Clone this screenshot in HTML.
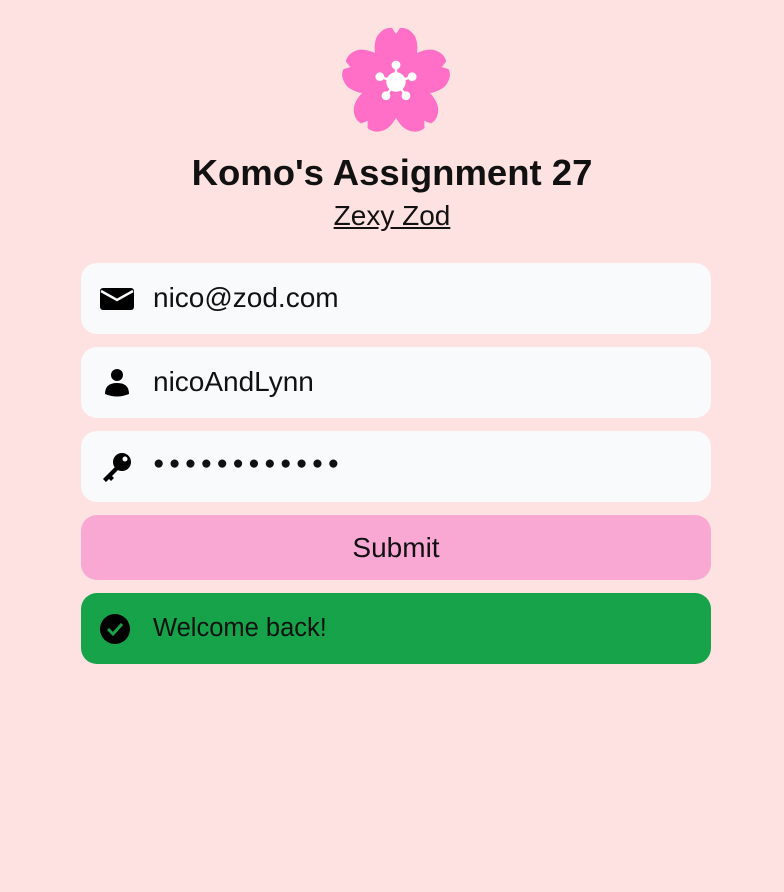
<!DOCTYPE html>
<html><head><style>
body{margin:0;background:#fee2e2;font-family:"Liberation Sans",sans-serif;width:784px;height:892px;position:relative;overflow:hidden}
.t{position:absolute;left:0;width:784px;text-align:center}
.box{position:absolute;left:81px;width:630px;border-radius:16px;background:#f8fafc}
.box span{position:absolute;left:72px;font-size:28px;color:#111}
.ic{position:absolute;left:19px}
</style></head><body>
<svg style="position:absolute;left:336px;top:22px" width="120" height="115" viewBox="-60 -60 120 115">
<g fill="#ff6ec7">
<path id="p" d="M0,2 C-22,-8 -25,-38 -18,-47 Q-12,-55 -4,-54 L0,-48 L4,-54 Q12,-55 18,-47 C25,-38 22,-8 0,2Z"/>
<use href="#p" transform="rotate(72)"/><use href="#p" transform="rotate(144)"/><use href="#p" transform="rotate(216)"/><use href="#p" transform="rotate(288)"/>
</g>
<g fill="#fff" stroke="#fff" stroke-width="2.4">
<circle r="8.5"/>
<g id="s"><line x1="0" y1="0" x2="0" y2="-17"/><circle cy="-17" r="3.2"/></g>
<use href="#s" transform="rotate(72)"/><use href="#s" transform="rotate(144)"/><use href="#s" transform="rotate(216)"/><use href="#s" transform="rotate(288)"/>
</g>
</svg>
<div class="t" style="top:152px;font-size:36.5px;font-weight:bold;color:#111">Komo's Assignment 27</div>
<div class="t" style="top:200px;font-size:28px;color:#111"><span style="text-decoration:underline">Zexy Zod</span></div>
<div class="box" style="top:263px;height:71px"><svg class="ic" style="top:25px" width="34" height="22" viewBox="0 0 34 22"><rect width="34" height="22" rx="3"/><path d="M1,3 L17,12 L33,3" stroke="#f8fafc" stroke-width="2.5" fill="none"/></svg><span style="top:19px">nico@zod.com</span></div>
<div class="box" style="top:347px;height:71px"><svg class="ic" style="top:20px" width="34" height="32" viewBox="0 0 34 32"><circle cx="17" cy="8" r="6"/><path d="M5,27 Q5,16 17,16 Q29,16 29,27 Q17,32 5,27Z"/></svg><span style="top:19px">nicoAndLynn</span></div>
<div class="box" style="top:431px;height:71px"><svg class="ic" style="top:20px" width="34" height="32" viewBox="0 0 34 32"><circle cx="22" cy="11" r="9"/><path d="M16,15 L3,28 L6,31 L9,28 L11,30 L14,27 L12,25 L19,18Z"/><circle cx="25" cy="8" r="2.5" fill="#f8fafc"/></svg><span style="top:22px;letter-spacing:4.4px;font-size:19px">●●●●●●●●●●●●</span></div>
<div class="box" style="top:515px;height:65px;background:#f9a8d4"><div style="text-align:center;font-size:28px;line-height:65px;color:#111">Submit</div></div>
<div class="box" style="top:593px;height:71px;background:#16a34a"><svg class="ic" style="top:21px" width="30" height="30" viewBox="0 0 30 30"><circle cx="15" cy="15" r="15"/><path d="M8,15 L13,20 L22,10" stroke="#16a34a" stroke-width="3" fill="none"/></svg><span style="top:21px;font-size:25.5px">Welcome back!</span></div>
</body></html>
